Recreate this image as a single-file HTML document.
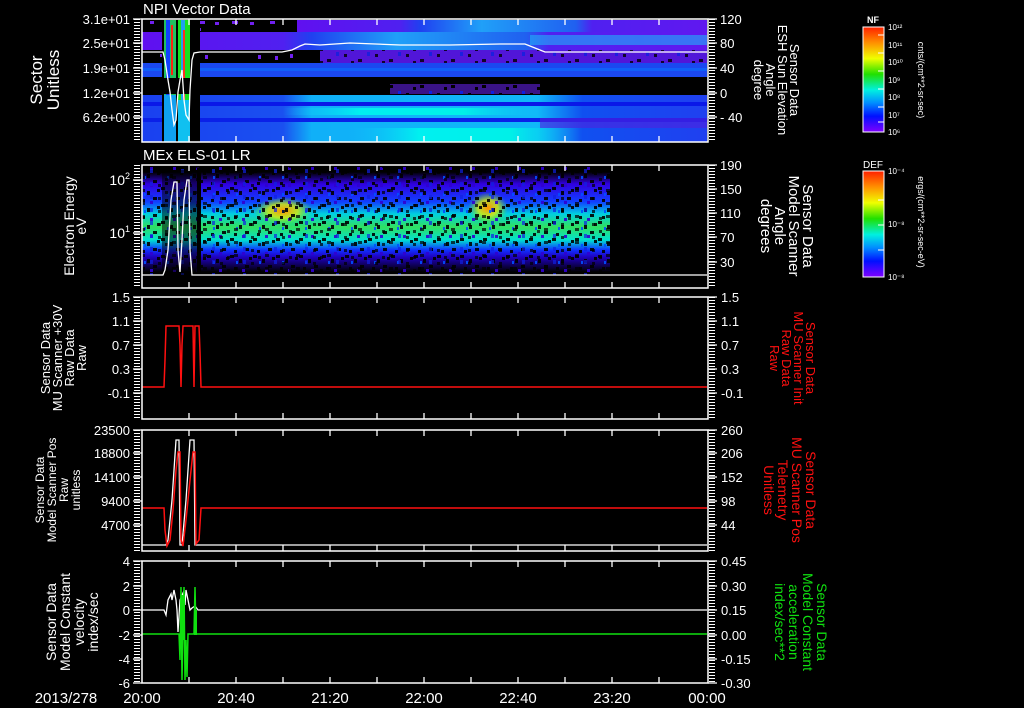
<!DOCTYPE html>
<html><head><meta charset="utf-8"><style>
html,body{margin:0;padding:0;background:#000;width:1024px;height:708px;overflow:hidden}
svg{display:block}
text{font-family:"Liberation Sans",sans-serif;fill:#fff}
</style></head><body>
<svg width="1024" height="708" viewBox="0 0 1024 708" xmlns="http://www.w3.org/2000/svg">
<defs>
<linearGradient id="cb" x1="0" y1="0" x2="0" y2="1">
<stop offset="0" stop-color="#ff2000"/><stop offset="0.15" stop-color="#ff9000"/><stop offset="0.3" stop-color="#f0ff00"/><stop offset="0.45" stop-color="#20e000"/><stop offset="0.6" stop-color="#00f0e0"/><stop offset="0.72" stop-color="#0090ff"/><stop offset="0.85" stop-color="#0010ff"/><stop offset="1" stop-color="#8000ff"/>
</linearGradient>
<linearGradient id="band2" x1="0" y1="0" x2="0" y2="1">
<stop offset="0" stop-color="#000"/><stop offset="0.12" stop-color="#3000e0"/><stop offset="0.3" stop-color="#1040ff"/><stop offset="0.42" stop-color="#00d0e0"/><stop offset="0.55" stop-color="#30e060"/><stop offset="0.68" stop-color="#00e0d0"/><stop offset="0.78" stop-color="#1030ff"/><stop offset="0.85" stop-color="#2000c0"/><stop offset="1" stop-color="#000"/>
</linearGradient>
<radialGradient id="yel" cx="0.5" cy="0.5" r="0.5"><stop offset="0" stop-color="#ff9000"/><stop offset="0.5" stop-color="#e0f000" stop-opacity="0.8"/><stop offset="1" stop-color="#60f000" stop-opacity="0"/></radialGradient>
<pattern id="noise" width="23" height="17" patternUnits="userSpaceOnUse">
<rect x="0" y="0" width="4" height="3" fill="#000"/><rect x="9" y="4" width="3" height="4" fill="#000"/><rect x="15" y="10" width="4" height="3" fill="#000"/><rect x="4" y="12" width="3" height="3" fill="#000"/><rect x="19" y="2" width="3" height="3" fill="#000"/><rect x="12" y="14" width="3" height="3" fill="#3000d0"/><rect x="6" y="6" width="2" height="3" fill="#0050ff"/>
</pattern>
<pattern id="noise2" width="31" height="13" patternUnits="userSpaceOnUse">
<rect x="3" y="2" width="3" height="3" fill="#000"/><rect x="17" y="7" width="4" height="3" fill="#000"/><rect x="26" y="0" width="3" height="4" fill="#1020e0"/><rect x="10" y="9" width="3" height="3" fill="#000"/>
</pattern>
<linearGradient id="p1mid" x1="0" y1="0" x2="1" y2="0">
<stop offset="0" stop-color="#6010f0"/><stop offset="0.25" stop-color="#5020f0"/><stop offset="0.3" stop-color="#2040f0"/><stop offset="0.45" stop-color="#20a0f8"/><stop offset="0.68" stop-color="#2060f0"/><stop offset="0.72" stop-color="#5020f0"/><stop offset="1" stop-color="#6018f0"/>
</linearGradient>
<linearGradient id="p1low" x1="0" y1="0" x2="1" y2="0">
<stop offset="0" stop-color="#1a40f0"/><stop offset="0.25" stop-color="#1a50f0"/><stop offset="0.3" stop-color="#10b0f8"/><stop offset="0.7" stop-color="#10b8f8"/><stop offset="0.78" stop-color="#1050f0"/><stop offset="1" stop-color="#2040f0"/>
</linearGradient>
<linearGradient id="cy" x1="0" y1="0" x2="1" y2="0">
<stop offset="0" stop-color="#10c0f8" stop-opacity="0"/><stop offset="0.3" stop-color="#00f0f0"/><stop offset="0.7" stop-color="#00f0e8"/><stop offset="1" stop-color="#10c0f8" stop-opacity="0"/>
</linearGradient>
</defs>

<!-- PANEL 1 -->
<rect x="142" y="19" width="566" height="123" fill="#000"/>
<rect x="297" y="20" width="410" height="12" fill="url(#p1mid)"/>
<rect x="142" y="32" width="565" height="18" fill="url(#p1mid)"/>
<rect x="530" y="35" width="177" height="10" fill="#20b0f8" opacity="0.6"/>
<rect x="320" y="50" width="387" height="13" fill="#5a18f0" opacity="0.9"/>
<rect x="320" y="50" width="387" height="13" fill="url(#noise2)" opacity="0.8"/>
<rect x="142" y="63" width="565" height="14" fill="#1a48f0"/>
<rect x="142" y="68" width="565" height="3" fill="#1060f8"/>
<rect x="390" y="84" width="150" height="10" fill="#6020e0" opacity="0.6"/>
<rect x="390" y="84" width="150" height="10" fill="url(#noise2)"/>
<rect x="142" y="95" width="565" height="47" fill="url(#p1low)"/>
<rect x="142" y="102" width="565" height="4" fill="#0a18e8"/>
<rect x="142" y="118" width="565" height="4" fill="#0a20e8"/>
<rect x="282" y="108" width="260" height="7" fill="url(#cy)"/>
<rect x="350" y="128" width="230" height="14" fill="url(#cy)"/>
<rect x="540" y="118" width="167" height="10" fill="#5020e0" opacity="0.6"/>
<g fill="#7020f0">
<rect x="150" y="21" width="4" height="3"/><rect x="200" y="21" width="5" height="3"/><rect x="215" y="22" width="4" height="3"/><rect x="232" y="21" width="6" height="3"/><rect x="250" y="22" width="4" height="3"/><rect x="270" y="21" width="5" height="3"/><rect x="198" y="28" width="3" height="3"/>
<rect x="160" y="54" width="3" height="3"/><rect x="205" y="55" width="3" height="4"/><rect x="258" y="55" width="3" height="4"/><rect x="275" y="56" width="3" height="4"/><rect x="290" y="54" width="3" height="4"/>
</g>
<!-- burst -->
<rect x="162" y="20" width="38" height="122" fill="#000"/>
<rect x="164" y="20" width="12" height="122" fill="#20c060"/>
<rect x="166" y="20" width="4" height="122" fill="#1040ff"/>
<rect x="171" y="25" width="2" height="50" fill="#ff2010"/>
<rect x="178" y="20" width="12" height="122" fill="#18e020"/>
<rect x="181" y="20" width="4" height="122" fill="#20a0f0"/>
<rect x="183" y="30" width="2" height="100" fill="#ff3020"/>
<rect x="164" y="95" width="12" height="47" fill="#10a0f0"/>
<rect x="178" y="100" width="12" height="42" fill="#10c0f0"/>
<rect x="162" y="78" width="38" height="16" fill="#000"/>
<polyline points="142,52 163,52 165,60 168,80 170,92 172,110 174,125 176,120 178,92 180,80 182,70 184,100 186,115 189,120 190,90 192,60 194,53 200,52 282,52 292,50 300,46 305,44 320,45 350,43 400,45 450,45 500,44 525,44 535,48 545,52 707,52" fill="none" stroke="#fff" stroke-width="1.3"/>
<rect x="142" y="19" width="566" height="123" fill="none" stroke="#fff" stroke-width="1.5"/>

<!-- PANEL 2 -->
<rect x="142" y="172" width="468" height="100" fill="url(#band2)"/>
<ellipse cx="283" cy="211" rx="30" ry="14" fill="url(#yel)"/>
<ellipse cx="488" cy="208" rx="20" ry="16" fill="url(#yel)"/>
<rect x="142" y="165" width="468" height="110" fill="url(#noise)" opacity="0.9"/>
<rect x="142" y="165" width="468" height="110" fill="url(#noise2)" opacity="0.7"/>
<rect x="162" y="170" width="38" height="105" fill="#000" opacity="0.5"/>
<rect x="197" y="168" width="4" height="110" fill="#000"/>
<polyline points="142,275 163,275 165,270 168,250 171,200 174,182 177,182 178,250 180,272 182,240 184,200 187,180 189,180 190,250 192,275 200,275 707,275" fill="none" stroke="#fff" stroke-width="1.3"/>
<rect x="142" y="165" width="566" height="123" fill="none" stroke="#fff" stroke-width="1.5"/>

<!-- PANEL 3 -->
<polyline points="142,387 164,387 165,360 166,326 179,326 180,345 181,387 182,345 183,326 193,326 194,387 195,326 199,326 200,352 201,387 707,387" fill="none" stroke="#ff1010" stroke-width="1.5"/>
<rect x="142" y="297" width="566" height="122" fill="none" stroke="#fff" stroke-width="1.5"/>

<!-- PANEL 4 -->
<polyline points="142,545 166,545 168,540 172,500 176,440 179,440 180,545 182,545 186,500 190,440 194,440 195,545 198,545 707,545" fill="none" stroke="#fff" stroke-width="1.3"/>
<polyline points="142,508 164,508 165,530 167,546 170,540 173,510 176,470 178,452 180,452 181,540 183,546 186,520 190,480 193,452 195,452 196,544 199,540 201,508 707,508" fill="none" stroke="#ff1010" stroke-width="1.5"/>
<rect x="142" y="430" width="566" height="121" fill="none" stroke="#fff" stroke-width="1.5"/>

<!-- PANEL 5 -->
<polyline points="142,610 164,610 166,615 168,600 171,594 172,600 174,590 176,600 177,610 178,632 180,600 183,593 185,605 186,590 188,600 190,610 192,608 195,606 198,610 707,610" fill="none" stroke="#fff" stroke-width="1.3"/>
<polyline points="142,634 179,634 180,660 181,587 182,680 183,630 184,587 185,680 186,640 187,677 188,634 190,634 194,634 195,587 196,634 707,634" fill="none" stroke="#10e010" stroke-width="1.5"/>
<rect x="181" y="595" width="4" height="45" fill="#10e010"/>
<rect x="194" y="610" width="3" height="25" fill="#10e010"/>
<rect x="142" y="561" width="566" height="122" fill="none" stroke="#fff" stroke-width="1.5"/>

<!-- ticks -->
<g stroke="#fff" stroke-width="1.3">
<path d="M189 19v6M236 19v6M283 19v6M330 19v6M377 19v6M424 19v6M471 19v6M518 19v6M565 19v6M612 19v6M659 19v6M189 142v-6M236 142v-6M283 142v-6M330 142v-6M377 142v-6M424 142v-6M471 142v-6M518 142v-6M565 142v-6M612 142v-6M659 142v-6"/>
<path d="M189 165v6M236 165v6M283 165v6M330 165v6M377 165v6M424 165v6M471 165v6M518 165v6M565 165v6M612 165v6M659 165v6M189 288v-6M236 288v-6M283 288v-6M330 288v-6M377 288v-6M424 288v-6M471 288v-6M518 288v-6M565 288v-6M612 288v-6M659 288v-6"/>
<path d="M189 297v6M236 297v6M283 297v6M330 297v6M377 297v6M424 297v6M471 297v6M518 297v6M565 297v6M612 297v6M659 297v6M189 419v-6M236 419v-6M283 419v-6M330 419v-6M377 419v-6M424 419v-6M471 419v-6M518 419v-6M565 419v-6M612 419v-6M659 419v-6"/>
<path d="M189 430v6M236 430v6M283 430v6M330 430v6M377 430v6M424 430v6M471 430v6M518 430v6M565 430v6M612 430v6M659 430v6M189 551v-6M236 551v-6M283 551v-6M330 551v-6M377 551v-6M424 551v-6M471 551v-6M518 551v-6M565 551v-6M612 551v-6M659 551v-6"/>
<path d="M189 561v6M236 561v6M283 561v6M330 561v6M377 561v6M424 561v6M471 561v6M518 561v6M565 561v6M612 561v6M659 561v6M189 683v-6M236 683v-6M283 683v-6M330 683v-6M377 683v-6M424 683v-6M471 683v-6M518 683v-6M565 683v-6M612 683v-6M659 683v-6"/>
</g>
<g stroke="#fff" stroke-dasharray="1 2">
<path d="M137 19v123M712 19v123M137 165v123M712 165v123M137 297v122M712 297v122M137 430v121M712 430v121M137 561v122M712 561v122" stroke-width="6"/>
</g>
<g stroke="#fff" stroke-width="1.3">
<path d="M133 19h9M133 43h9M133 68h9M133 93h9M133 117h9M708 19h9M708 43h9M708 68h9M708 93h9M708 117h9"/>
<path d="M133 180h9M133 233h9M708 165h9M708 189h9M708 213h9M708 237h9M708 262h9"/>
<path d="M133 297h9M133 321h9M133 345h9M133 369h9M133 393h9M708 297h9M708 321h9M708 345h9M708 369h9M708 393h9"/>
<path d="M133 430h9M133 453h9M133 477h9M133 501h9M133 525h9M708 430h9M708 453h9M708 477h9M708 501h9M708 525h9"/>
<path d="M133 561h9M133 586h9M133 610h9M133 635h9M133 659h9M133 683h9M708 561h9M708 586h9M708 610h9M708 635h9M708 659h9M708 683h9"/>
</g>

<g font-size="13" text-anchor="end">
<text x="130" y="24">3.1e+01</text><text x="130" y="48">2.5e+01</text><text x="130" y="73">1.9e+01</text><text x="130" y="98">1.2e+01</text><text x="130" y="122">6.2e+00</text>
<text x="130" y="185" font-size="14">10<tspan font-size="9" dy="-6">2</tspan></text><text x="130" y="238" font-size="14">10<tspan font-size="9" dy="-6">1</tspan></text>
<text x="130" y="302">1.5</text><text x="130" y="326">1.1</text><text x="130" y="350">0.7</text><text x="130" y="374">0.3</text><text x="130" y="398">-0.1</text>
<text x="130" y="435">23500</text><text x="130" y="458">18800</text><text x="130" y="482">14100</text><text x="130" y="506">9400</text><text x="130" y="530">4700</text>
<text x="130" y="566">4</text><text x="130" y="591">2</text><text x="130" y="615">0</text><text x="130" y="640">-2</text><text x="130" y="664">-4</text><text x="130" y="688">-6</text>
</g>
<g font-size="13">
<text x="720" y="24">120</text><text x="720" y="48">80</text><text x="720" y="73">40</text><text x="720" y="98">0</text><text x="720" y="122">- 40</text>
<text x="720" y="170">190</text><text x="720" y="194">150</text><text x="720" y="218">110</text><text x="720" y="242">70</text><text x="720" y="267">30</text>
<text x="721" y="302">1.5</text><text x="721" y="326">1.1</text><text x="721" y="350">0.7</text><text x="721" y="374">0.3</text><text x="721" y="398">-0.1</text>
<text x="721" y="435">260</text><text x="721" y="458">206</text><text x="721" y="482">152</text><text x="721" y="506">98</text><text x="721" y="530">44</text>
<text x="721" y="566">0.45</text><text x="721" y="591">0.30</text><text x="721" y="615">0.15</text><text x="721" y="640">0.00</text><text x="721" y="664">-0.15</text><text x="721" y="688">-0.30</text>
</g>
<g font-size="15" text-anchor="middle">
<text x="142" y="703">20:00</text><text x="236" y="703">20:40</text><text x="330" y="703">21:20</text><text x="424" y="703">22:00</text><text x="518" y="703">22:40</text><text x="612" y="703">23:20</text><text x="707" y="703">00:00</text>
<text x="66" y="703">2013/278</text>
</g>
<text x="143" y="14" font-size="15">NPI Vector Data</text>
<text x="143" y="160" font-size="15">MEx ELS-01 LR</text>

<g font-size="17" text-anchor="middle"><text transform="translate(42,80) rotate(-90)">Sector</text><text transform="translate(59,80) rotate(-90)">Unitless</text></g>
<g font-size="14" text-anchor="middle"><text transform="translate(74,226) rotate(-90)">Electron Energy</text><text transform="translate(86,226) rotate(-90)">eV</text></g>
<g font-size="13" text-anchor="middle"><text transform="translate(50,358) rotate(-90)">Sensor Data</text><text transform="translate(62,358) rotate(-90)">MU Scanner +30V</text><text transform="translate(74,358) rotate(-90)">Raw Data</text><text transform="translate(86,358) rotate(-90)">Raw</text></g>
<g font-size="12" text-anchor="middle"><text transform="translate(44,490) rotate(-90)">Sensor Data</text><text transform="translate(56,490) rotate(-90)">Model Scanner Pos</text><text transform="translate(68,490) rotate(-90)">Raw</text><text transform="translate(80,490) rotate(-90)">unitless</text></g>
<g font-size="14" text-anchor="middle"><text transform="translate(56,622) rotate(-90)">Sensor Data</text><text transform="translate(70,622) rotate(-90)">Model Constant</text><text transform="translate(84,622) rotate(-90)">velocity</text><text transform="translate(98,622) rotate(-90)">index/sec</text></g>

<g font-size="13" text-anchor="middle"><text transform="translate(790,80) rotate(90)">Sensor Data</text><text transform="translate(778,80) rotate(90)">ESH Sun Elevation</text><text transform="translate(766,80) rotate(90)">Angle</text><text transform="translate(754,80) rotate(90)">degree</text></g>
<g font-size="15" text-anchor="middle"><text transform="translate(803,226) rotate(90)">Sensor Data</text><text transform="translate(789,226) rotate(90)">Model Scanner</text><text transform="translate(775,226) rotate(90)">Angle</text><text transform="translate(761,226) rotate(90)">degrees</text></g>
<g font-size="13" text-anchor="middle"><text transform="translate(806,358) rotate(90)" style="fill:#ff1010">Sensor Data</text><text transform="translate(794,358) rotate(90)" style="fill:#ff1010">MU Scanner Init</text><text transform="translate(782,358) rotate(90)" style="fill:#ff1010">Raw Data</text><text transform="translate(770,358) rotate(90)" style="fill:#ff1010">Raw</text></g>
<g font-size="14" text-anchor="middle"><text transform="translate(806,490) rotate(90)" style="fill:#ff1010">Sensor Data</text><text transform="translate(792,490) rotate(90)" style="fill:#ff1010">MU Scanner Pos</text><text transform="translate(778,490) rotate(90)" style="fill:#ff1010">Telemetry</text><text transform="translate(764,490) rotate(90)" style="fill:#ff1010">Unitless</text></g>
<g font-size="14" text-anchor="middle"><text transform="translate(817,622) rotate(90)" style="fill:#10e010">Sensor Data</text><text transform="translate(803,622) rotate(90)" style="fill:#10e010">Model Constant</text><text transform="translate(789,622) rotate(90)" style="fill:#10e010">acceleration</text><text transform="translate(775,622) rotate(90)" style="fill:#10e010">index/sec**2</text></g>

<rect x="863" y="27" width="21" height="105" fill="url(#cb)" stroke="#fff" stroke-width="1"/>
<rect x="863" y="171" width="21" height="106" fill="url(#cb)" stroke="#fff" stroke-width="1"/>
<g stroke="#fff" stroke-width="1"><path d="M878 35h6M878 53h6M878 71h6M878 89h6M878 107h6M878 122h6M878 200h6M878 225h6M878 250h6"/></g>
<text x="873" y="23" font-size="9" text-anchor="middle" font-weight="bold">NF</text>
<text x="873" y="168" font-size="10" text-anchor="middle">DEF</text>
<g font-size="8"><text x="888" y="30">10¹²</text><text x="888" y="48">10¹¹</text><text x="888" y="65">10¹⁰</text><text x="888" y="83">10⁹</text><text x="888" y="100">10⁸</text><text x="888" y="118">10⁷</text><text x="888" y="135">10⁶</text>
<text x="888" y="174">10⁻⁴</text><text x="888" y="227">10⁻⁸</text><text x="888" y="280">10⁻⁸</text></g>
<g font-size="9" text-anchor="middle"><text transform="translate(918,80) rotate(90)">cnts/(cm**2-sr-sec)</text><text transform="translate(918,222) rotate(90)">ergs/(cm**2-sr-sec-eV)</text></g>
</svg>
</body></html>
